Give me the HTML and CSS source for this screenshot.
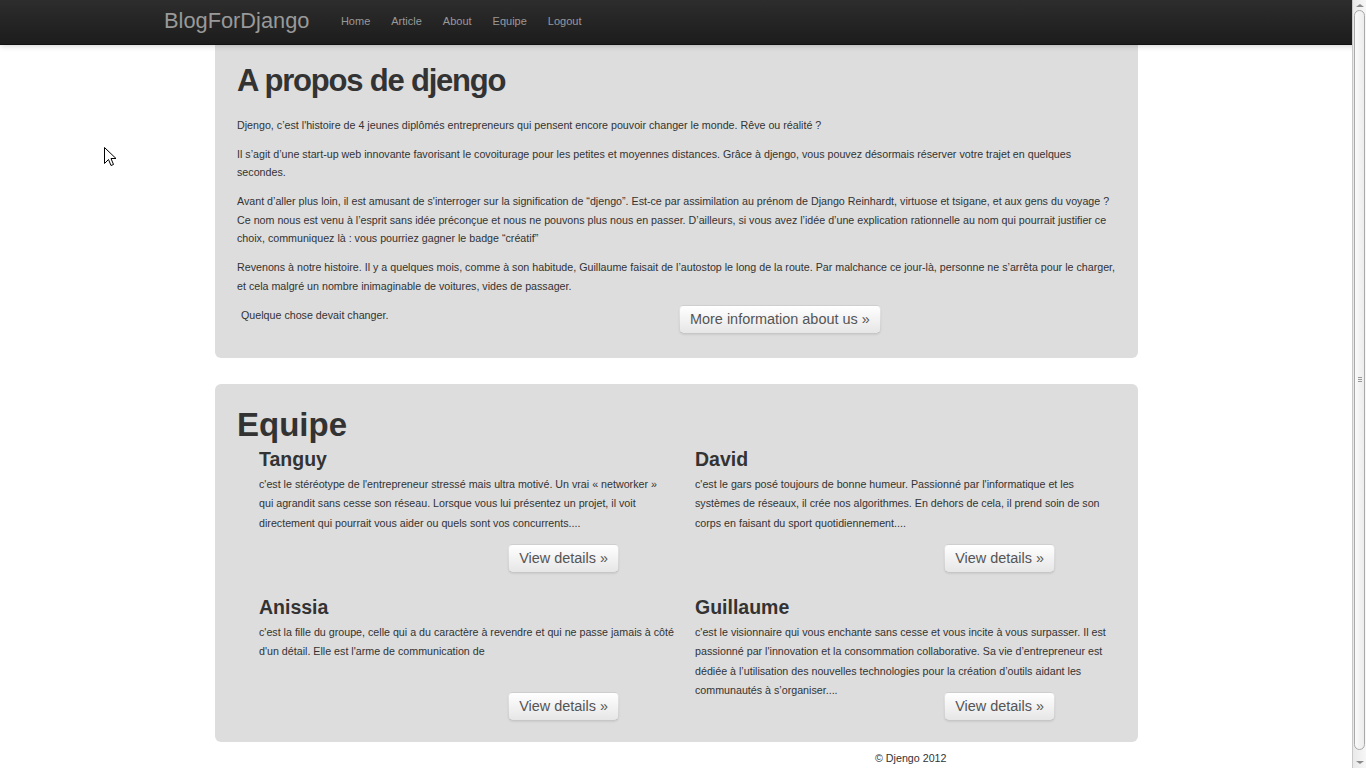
FILE: index.html
```html
<!DOCTYPE html>
<html lang="fr">
<head>
<meta charset="utf-8">
<title>BlogForDjango</title>
<link rel="stylesheet" href="styles.css">
</head>
<body>
<header class="navbar">
  <a class="brand" href="#">BlogForDjango</a>
  <nav class="nav">
    <a href="#">Home</a>
    <a href="#">Article</a>
    <a href="#">About</a>
    <a href="#">Equipe</a>
    <a href="#">Logout</a>
  </nav>
</header>

<main class="page">
  <section class="hero hero-about">
    <h1 class="hero-title">A propos de djengo</h1>
    <p>Djengo, c’est l'histoire de 4 jeunes diplômés entrepreneurs qui pensent encore pouvoir changer le monde. Rêve ou réalité ?</p>
    <p>Il s’agit d’une start-up web innovante favorisant le covoiturage pour les petites et moyennes distances. Grâce à djengo, vous pouvez désormais réserver votre trajet en quelques secondes.</p>
    <p>Avant d’aller plus loin, il est amusant de s'interroger sur la signification de “djengo”. Est-ce par assimilation au prénom de Django Reinhardt, virtuose et tsigane, et aux gens du voyage ? Ce nom nous est venu à l’esprit sans idée préconçue et nous ne pouvons plus nous en passer. D’ailleurs, si vous avez l’idée d’une explication rationnelle au nom qui pourrait justifier ce choix, communiquez là : vous pourriez gagner le badge “créatif”</p>
    <p>Revenons à notre histoire. Il y a quelques mois, comme à son habitude, Guillaume faisait de l’autostop le long de la route. Par malchance ce jour-là, personne ne s’arrêta pour le charger, et cela malgré un nombre inimaginable de voitures, vides de passager.</p>
    <div class="hero-last">
      <p class="indent">Quelque chose devait changer.</p>
      <div><a class="btn btn-large" href="#">More information about us »</a></div>
    </div>
  </section>

  <section class="hero hero-team">
    <h1 class="team-title">Equipe</h1>
    <div class="team-grid">
      <article class="member">
        <h2>Tanguy</h2>
        <p class="desc">c'est le stéréotype de l'entrepreneur stressé mais ultra motivé. Un vrai « networker » qui agrandit sans cesse son réseau. Lorsque vous lui présentez un projet, il voit directement qui pourrait vous aider ou quels sont vos concurrents....</p>
        <div class="actions"><a class="btn" href="#">View details »</a></div>
      </article>
      <article class="member">
        <h2>David</h2>
        <p class="desc">c'est le gars posé toujours de bonne humeur. Passionné par l'informatique et les systèmes de réseaux, il crée nos algorithmes. En dehors de cela, il prend soin de son corps en faisant du sport quotidiennement....</p>
        <div class="actions"><a class="btn" href="#">View details »</a></div>
      </article>
      <article class="member">
        <h2>Anissia</h2>
        <p class="desc">c'est la fille du groupe, celle qui a du caractère à revendre et qui ne passe jamais à côté d'un détail. Elle est l'arme de communication de</p>
        <div class="actions"><a class="btn" href="#">View details »</a></div>
      </article>
      <article class="member">
        <h2>Guillaume</h2>
        <p class="desc">c'est le visionnaire qui vous enchante sans cesse et vous incite à vous surpasser. Il est passionné par l'innovation et la consommation collaborative. Sa vie d’entrepreneur est dédiée à l’utilisation des nouvelles technologies pour la création d’outils aidant les communautés à s’organiser....</p>
        <div class="actions"><a class="btn" href="#">View details »</a></div>
      </article>
    </div>
  </section>

  <footer class="footer">
    <p>© Djengo 2012</p>
  </footer>
</main>

<div class="scrollbar" aria-hidden="true">
  <span class="sb-up"></span>
  <span class="sb-thumb"><span class="sb-grip"></span></span>
  <span class="sb-down"></span>
</div>

<svg class="cursor" width="13" height="21" viewBox="0 0 13 21" aria-hidden="true">
  <path d="M0.5 0.5 L0.5 16.5 L4.5 12.5 L7 18.5 L9.5 17.5 L7 11.5 L12 11.5 Z" fill="#fff" stroke="#000" stroke-width="1" stroke-linejoin="miter"/>
</svg>
</body>
</html>
```

FILE: styles.css
```css
* {
  box-sizing: border-box;
}

html, body {
  margin: 0;
  padding: 0;
}

body {
  font-family: "Liberation Sans", Arial, Helvetica, sans-serif;
  color: #333;
  background: #fff;
  font-size: 10.7px;
}

a {
  text-decoration: none;
}

/* ---------- navbar ---------- */
.navbar {
  height: 45px;
  display: flex;
  align-items: flex-start;
  padding-left: 164px;
  background: linear-gradient(#2d2d2d, #1c1c1c);
  border-bottom: 1px solid #111;
  box-shadow: 0 1px 6px rgba(0, 0, 0, 0.18);
  position: relative;
  z-index: 2;
}

.brand {
  font-size: 21.8px;
  color: #999;
  margin-right: 21px;
  line-height: 42px;
}

.nav {
  display: flex;
}

.nav a {
  font-size: 11px;
  color: #999;
  padding: 0 10.5px;
  line-height: 42px;
}

/* ---------- page ---------- */
.page {
  width: 923px;
  margin: 0 auto;
  position: relative;
  left: -6.5px;
}

.hero {
  background: #dddddd;
  border-radius: 6px;
  padding: 0 22px;
}

.hero-about {
  border-radius: 0 0 6px 6px;
  padding-top: 16px;
  padding-bottom: 24px;
}

.hero-title {
  font-size: 31px;
  line-height: 40px;
  letter-spacing: -1.2px;
  margin: 0 0 14.75px;
  font-weight: bold;
}

.hero-about p {
  line-height: 18.5px;
  margin: 0 0 10.5px;
}

.hero-last {
  display: grid;
  grid-template-columns: 442px 1fr;
  align-items: start;
}

.hero-last p.indent {
  padding-left: 4px;
  margin: 0;
}

.hero-last .btn {
  margin-top: -1px;
}

/* ---------- team ---------- */
.hero-team {
  margin-top: 26px;
  padding-top: 21px;
  padding-bottom: 21px;
}

.team-title {
  font-size: 33px;
  line-height: 40px;
  margin: 0;
  font-weight: bold;
}

.team-grid {
  display: grid;
  grid-template-columns: 415px 415px;
  column-gap: 21px;
  row-gap: 20px;
  padding-left: 22px;
}

.member h2 {
  font-size: 19.5px;
  line-height: 28px;
  margin: 0 0 2px;
  font-weight: bold;
}

.member .desc {
  height: 69px;
  margin: 0;
  line-height: 19.5px;
  overflow: visible;
}

.actions {
  display: flex;
  justify-content: flex-end;
  padding-right: 55px;
}

/* ---------- buttons ---------- */
.btn {
  display: inline-block;
  height: 29px;
  line-height: 27px;
  padding: 0 10px;
  font-size: 14.45px;
  color: #555;
  background: linear-gradient(#ffffff, #e6e6e6);
  border: 1px solid rgba(0, 0, 0, 0.1);
  border-bottom-color: rgba(0, 0, 0, 0.22);
  border-radius: 5px;
  box-shadow: inset 0 1px 0 rgba(255, 255, 255, 0.2), 0 1px 2px rgba(0, 0, 0, 0.08);
  white-space: nowrap;
}

/* ---------- footer ---------- */
.footer {
  padding-left: 660px;
}

.footer p {
  margin: 9px 0 0;
  line-height: 14px;
}

/* ---------- browser scrollbar (as seen in the screenshot) ---------- */
.scrollbar {
  position: fixed;
  top: 0;
  right: 0;
  width: 14px;
  height: 768px;
  background: linear-gradient(to right, #e9e9e9, #f7f7f7);
  border-left: 1px solid #c8c8c8;
  z-index: 5;
}

.sb-up,
.sb-down {
  position: absolute;
  left: 3px;
  width: 0;
  height: 0;
  border-left: 4px solid transparent;
  border-right: 4px solid transparent;
}

.sb-up {
  top: 4px;
  border-bottom: 3px solid #8a8a8a;
}

.sb-down {
  bottom: 4px;
  border-top: 3px solid #8a8a8a;
}

.sb-thumb {
  position: absolute;
  top: 10px;
  bottom: 18px;
  left: 1px;
  right: 1px;
  border: 1px solid #a9a9a9;
  border-radius: 6px;
  background: linear-gradient(to right, #fbfbfb, #ececec);
}

.sb-grip {
  position: absolute;
  left: 3px;
  width: 4px;
  top: 50%;
  height: 5px;
  margin-top: -3px;
  border-top: 1px solid #999;
  border-bottom: 1px solid #999;
}

.sb-grip::after {
  content: "";
  position: absolute;
  left: 0;
  right: 0;
  top: 1px;
  border-top: 1px solid #999;
}

/* ---------- mouse pointer overlay ---------- */
.cursor {
  position: absolute;
  left: 104px;
  top: 147px;
  z-index: 6;
}
```
